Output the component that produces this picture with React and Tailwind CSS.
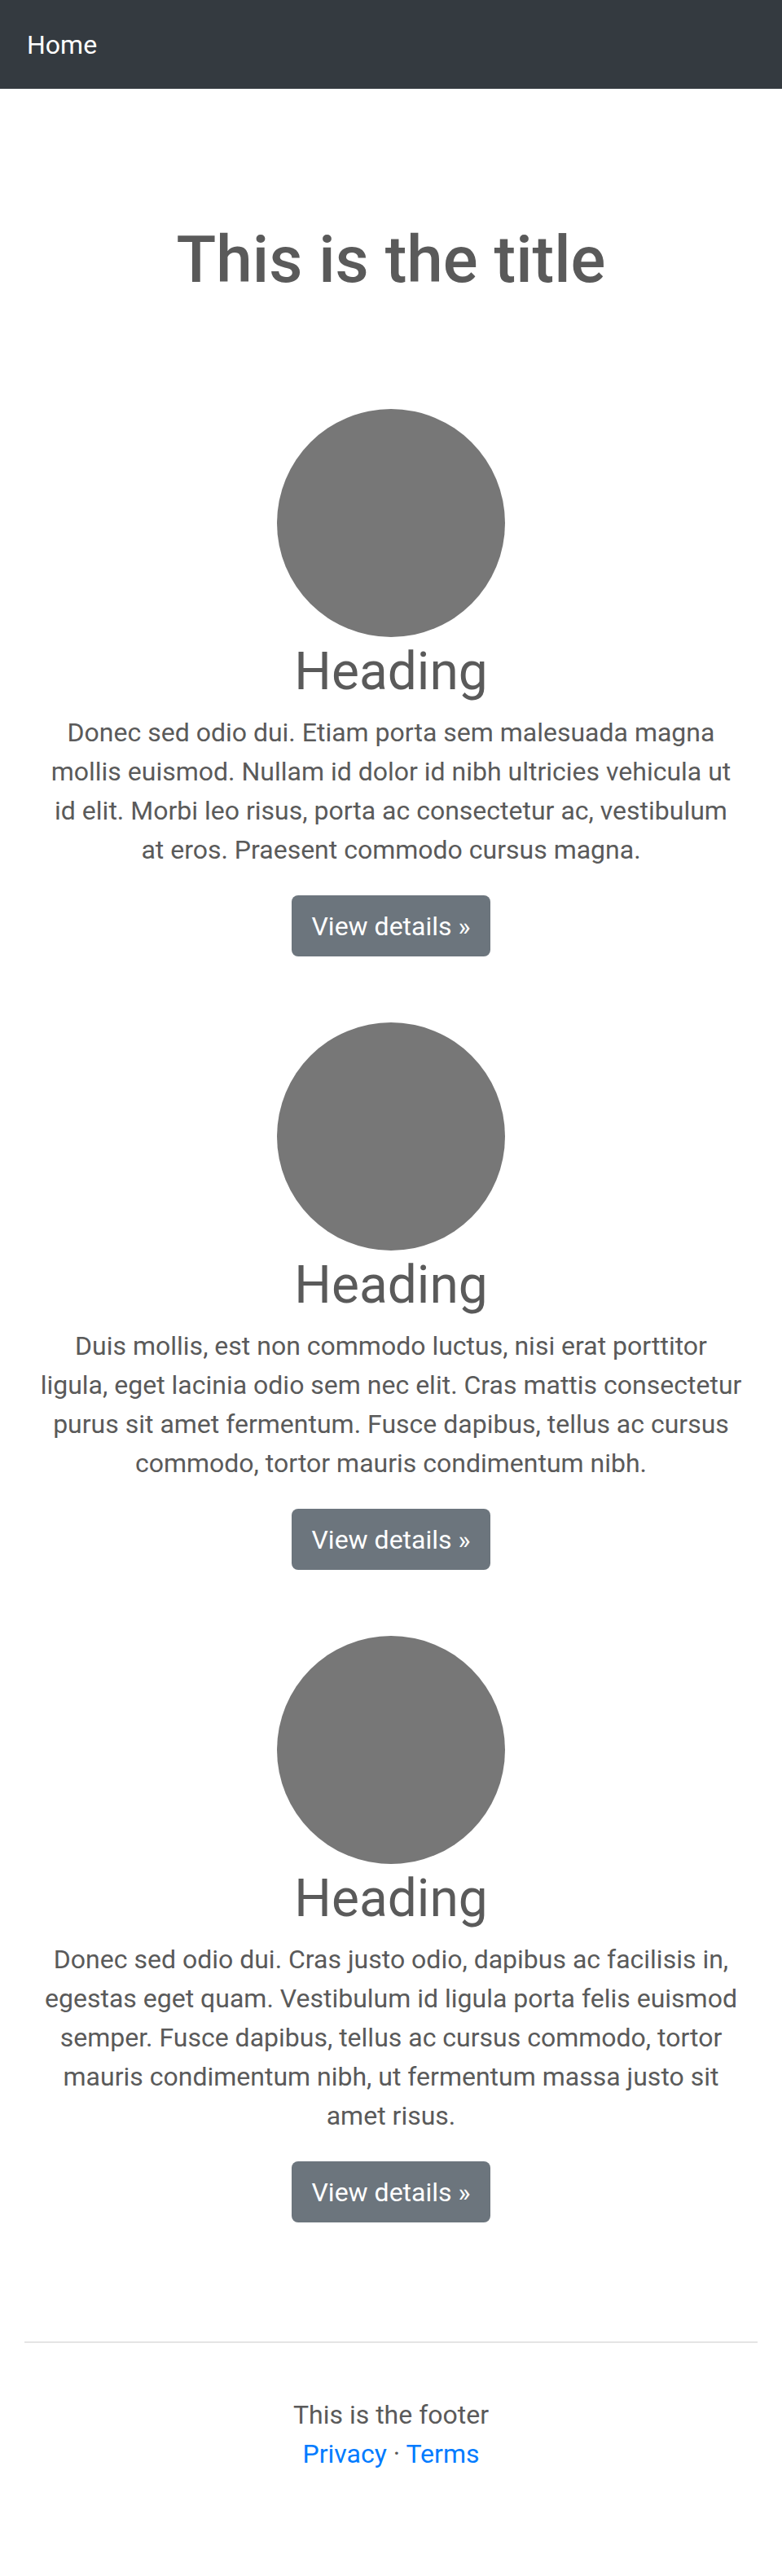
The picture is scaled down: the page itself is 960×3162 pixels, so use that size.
// Line breaks follow the reference so the wrap doesn't depend on font metrics.
const ITEMS = [
  [
    "Donec sed odio dui. Etiam porta sem malesuada magna",
    "mollis euismod. Nullam id dolor id nibh ultricies vehicula ut",
    "id elit. Morbi leo risus, porta ac consectetur ac, vestibulum",
    "at eros. Praesent commodo cursus magna.",
  ],
  [
    "Duis mollis, est non commodo luctus, nisi erat porttitor",
    "ligula, eget lacinia odio sem nec elit. Cras mattis consectetur",
    "purus sit amet fermentum. Fusce dapibus, tellus ac cursus",
    "commodo, tortor mauris condimentum nibh.",
  ],
  [
    "Donec sed odio dui. Cras justo odio, dapibus ac facilisis in,",
    "egestas eget quam. Vestibulum id ligula porta felis euismod",
    "semper. Fusce dapibus, tellus ac cursus commodo, tortor",
    "mauris condimentum nibh, ut fermentum massa justo sit",
    "amet risus.",
  ],
];

function Feature({ lines }) {
  return (
    <div className="flex flex-col items-center text-center">
      <div className="h-[280px] w-[280px] rounded-full bg-[#777]" />
      <h2 className="mt-[4px] text-[64px] leading-[77px] font-normal">Heading</h2>
      <p className="mt-[12px] text-[32px] leading-[48px]">
        {lines.map((l, i) => (
          <span key={i} className="block whitespace-nowrap">
            {l}
          </span>
        ))}
      </p>
      <a
        href="#"
        className="mt-[32px] flex h-[75px] items-center rounded-[8px] bg-[#6c757d] px-[24px] text-[32px] leading-[48px] text-white"
      >
        View details »
      </a>
    </div>
  );
}

export default function App() {
  return (
    <div className="min-h-[3162px] bg-white font-['Roboto',sans-serif] text-[#5a5a5a]">
      <nav className="flex h-[109px] items-center bg-[#343a40] px-[33px]">
        <a href="#" className="text-[32px] leading-[48px] text-white">
          Home
        </a>
      </nav>

      <main>
        <h1 className="mt-[162px] text-center text-[80px] leading-[96px] font-medium">
          This is the title
        </h1>

        <section className="mt-[135px] flex flex-col gap-[81px] px-[30px]">
          {ITEMS.map((lines, i) => (
            <Feature key={i} lines={lines} />
          ))}
        </section>

        <hr className="mx-[30px] mt-[146px] border-t-2 border-[#e5e5e5]" />
      </main>

      <footer className="pt-[64px] text-center text-[32px] leading-[48px]">
        <p>This is the footer</p>
        <p>
          <a href="#" className="text-[#007bff]">
            Privacy
          </a>{" "}
          ·{" "}
          <a href="#" className="text-[#007bff]">
            Terms
          </a>
        </p>
      </footer>
    </div>
  );
}
